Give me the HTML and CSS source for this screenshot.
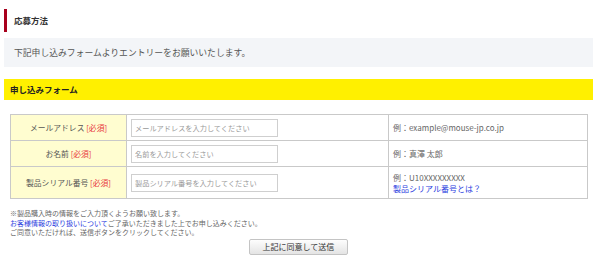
FILE: index.html
```html
<!DOCTYPE html>
<html lang="ja">
  <head>
    <meta charset="UTF-8" />
    <meta name="viewport" content="width=device-width, initial-scale=1.0" />
    <title>応募方法</title>
    <link rel="stylesheet" href="styles.css">
  </head>

  <body>
    <div id="wrap">
      <!-- 見出し -->
      <h2 class="ttl">応募方法</h2>

      <!-- 案内ボックス -->
      <p class="lead">下記申し込みフォームよりエントリーをお願いいたします。</p>

      <!-- フォーム見出し -->
      <h3 class="bar">申し込みフォーム</h3>

      <form class="entry">
        <table class="tbl">
          <tr>
            <th>メールアドレス <span class="req">[必須]</span></th>
            <td class="in"><input type="text" placeholder="メールアドレスを入力してください"></td>
            <td class="ex">例：example@mouse-jp.co.jp</td>
          </tr>
          <tr>
            <th>お名前 <span class="req">[必須]</span></th>
            <td class="in"><input type="text" placeholder="名前を入力してください"></td>
            <td class="ex">例：真澤 太郎</td>
          </tr>
          <tr class="tall">
            <th>製品シリアル番号 <span class="req">[必須]</span></th>
            <td class="in"><input type="text" placeholder="製品シリアル番号を入力してください"></td>
            <td class="ex">例：U10XXXXXXXXX<br><a href="#">製品シリアル番号とは？</a></td>
          </tr>
        </table>

        <!-- 注意書き -->
        <p class="note">
          ※製品購入時の情報をご入力頂くようお願い致します。<br>
          <a href="#">お客様情報の取り扱いについて</a>ご了承いただきました上でお申し込みください。<br>
          ご同意いただければ、送信ボタンをクリックしてください。
        </p>

        <div class="btn-area">
          <button type="button" class="btn">上記に同意して送信</button>
        </div>
      </form>
    </div>
  </body>
</html>
```

FILE: styles.css
```css
html, body, h2, h3, p{
  margin: 0;
  padding: 0;
}

body{
  font-family: "Noto Sans CJK JP", "Liberation Sans", sans-serif;
  color: #444;
  background-color: #fff;
}

#wrap{
  width: 589px;
  padding: 9px 0 0 4px;
}

/* 見出し */
.ttl{
  height: 23px;
  border-left: 3px solid #a8001c;
  padding-left: 7px;
  font-size: 8.5px;
  font-weight: bold;
  line-height: 23px;
  color: #333;
}

/* 案内ボックス */
.lead{
  margin-top: 6px;
  height: 29px;
  padding-left: 10px;
  background-color: #f3f5f8;
  font-size: 8.8px;
  line-height: 29px;
  color: #555;
}

/* 黄色バー */
.bar{
  margin-top: 12px;
  height: 21px;
  padding-left: 6px;
  background-color: #fff000;
  font-size: 8.5px;
  font-weight: bold;
  line-height: 21px;
  color: #222;
}

/* テーブル */
.tbl{
  margin: 14px 0 0 6px;
  width: 578px;
  border-collapse: collapse;
  table-layout: fixed;
  font-size: 8px;
}

.tbl th, .tbl td{
  border: 1px solid #c9c9c9;
  height: 25px;
  padding: 0;
}

.tbl tr.tall th, .tbl tr.tall td{
  height: 31px;
}

.tbl th{
  width: 115px;
  background-color: #fffdd0;
  font-size: 7.8px;
  font-weight: normal;
  color: #555;
  text-align: center;
}

.req{
  color: #e8383d;
}

.tbl td.in{
  width: 257px;
  padding-left: 4px;
}

.tbl td.in input{
  display: block;
  box-sizing: border-box;
  width: 147px;
  height: 18px;
  border: 1px solid #cfcfcf;
  padding: 0 3px;
  font-family: inherit;
  font-size: 7.2px;
}

.tbl td.in input::placeholder{
  color: #999;
}

.tbl td.ex{
  padding-left: 4px;
  color: #666;
  line-height: 11px;
}

.tbl a, .note a{
  color: #2b3ee0;
  text-decoration: none;
}

/* 注意書き */
.note{
  margin: 10px 0 0 6px;
  font-size: 7px;
  line-height: 9.5px;
  color: #666;
}

/* 送信ボタン */
.btn-area{
  display: flex;
  justify-content: center;
  margin-top: 1px;
}

.btn{
  width: 99px;
  height: 16px;
  padding: 0;
  border: 1px solid #c4c4c4;
  border-radius: 2px;
  background: linear-gradient(#fdfdfd, #e4e4e4);
  font-family: inherit;
  font-size: 8px;
  line-height: 14px;
  color: #333;
}
```
